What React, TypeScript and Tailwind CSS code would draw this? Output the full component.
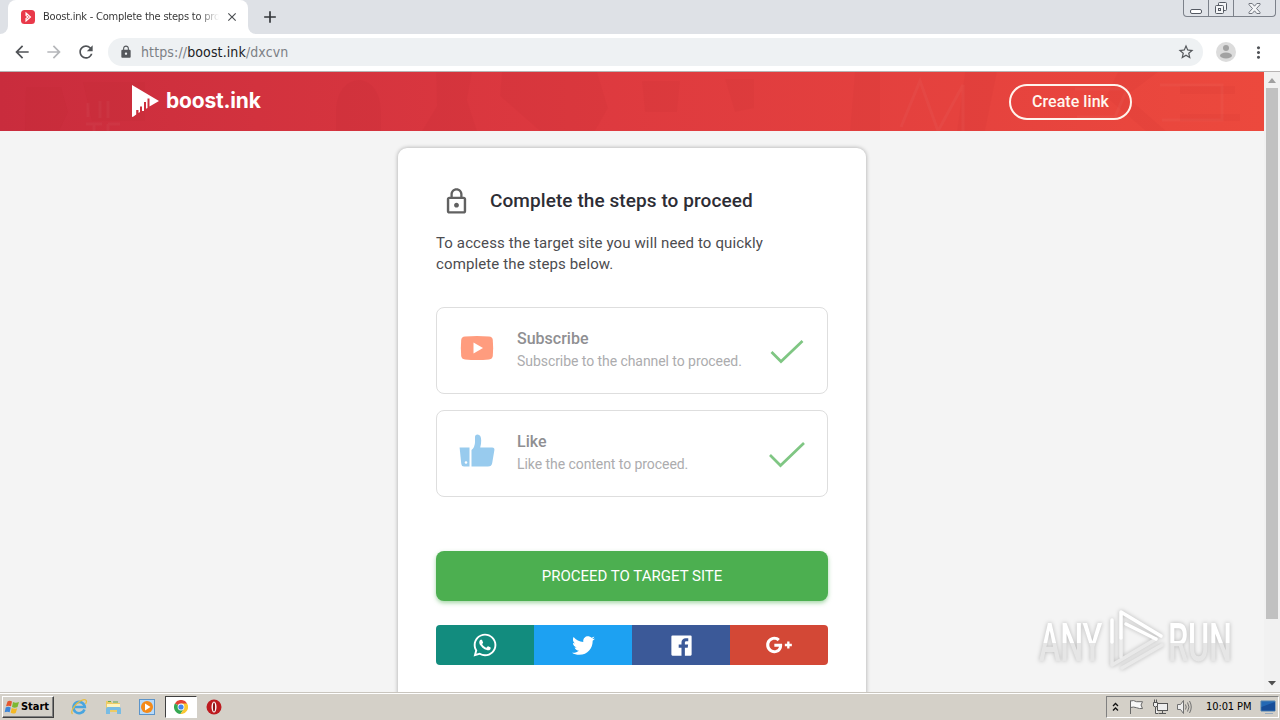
import type { ReactNode } from 'react';
import {
  MdAdd,
  MdArrowBack,
  MdArrowForward,
  MdClose,
  MdLock,
  MdLockOutline,
  MdMoreVert,
  MdRefresh,
  MdStarBorder,
} from 'react-icons/md';
import { FaTwitter, FaWhatsapp } from 'react-icons/fa';

export default function App() {
  return (
    <div className="relative flex h-[720px] w-[1280px] flex-col overflow-hidden bg-[#f4f4f4] font-['Roboto',sans-serif]">
      <TabStrip />
      <Toolbar />
      <div className="flex h-[620px] shrink-0">
        <main className="flex min-w-0 flex-1 flex-col overflow-hidden">
          <SiteHeader />
          <StepsCard />
        </main>
        <Scrollbar />
      </div>
      <Taskbar />
      <Watermark />
    </div>
  );
}

function TabStrip() {
  return (
    <div className="flex h-[34px] shrink-0 items-start justify-between bg-[#dee1e6]">
      <div className="flex h-full items-center">
        <div className="h-full w-2 bg-white">
          <div className="h-full rounded-br-lg bg-[#dee1e6]" />
        </div>
        <div className="flex h-full w-[240px] items-center rounded-t-lg bg-white pl-[13px]">
          <svg className="h-[14px] w-[14px] shrink-0" viewBox="0 0 14 14">
            <rect width="14" height="14" rx="3.5" fill="#e9394a" />
            <path d="M5 3l4.500 4L5 11V8.500L7 7 5 5.500z" fill="none" stroke="#fff" strokeWidth="1.1" />
          </svg>
          <span className="ml-2 mt-px w-[176px] overflow-hidden whitespace-nowrap bg-linear-to-r from-[#333] from-88% to-transparent bg-clip-text font-['DejaVu_Sans_Condensed','DejaVu_Sans',sans-serif] text-[11px] tracking-[-0.22px] text-transparent">
            Boost.ink - Complete the steps to proceed
          </span>
          <MdClose className="ml-1.5 shrink-0 text-[#4c4f53]" size={14} />
        </div>
        <div className="h-full w-2 bg-white">
          <div className="h-full rounded-bl-lg bg-[#dee1e6]" />
        </div>
        <MdAdd className="ml-1 text-[#33363a]" size={20} />
      </div>
      <div className="mr-1 flex h-[17px] w-[93px] rounded-b-[4px] border border-t-0 border-[#7c818a] bg-[#e0e3e8]">
        <div className="flex w-[25px] items-end justify-center border-r border-[#7c818a] pb-[2px]">
          <div className="h-[5px] w-[12px] rounded-xs border border-[#555a63] bg-white" />
        </div>
        <div className="flex w-[25px] items-center justify-center border-r border-[#7c818a]">
          <svg className="h-[14px] w-[14px]" viewBox="0 0 14 14" fill="#f4f5f7" stroke="#555a63">
            <rect x="4.500" y="1.500" width="8" height="8" rx="1" />
            <rect x="1.500" y="4.500" width="8" height="8" rx="1" />
            <rect x="4.500" y="7.500" width="2" height="2" />
          </svg>
        </div>
        <div className="flex flex-1 items-center justify-center">
          <svg className="h-[11px] w-[13px]" viewBox="0 0 13 11">
            <path
              d="M1 .5h3.200l2.300 2.700L8.800.5H12v1.200L8.500 5.500 12 9.300v1.200H8.800L6.500 7.800 4.200 10.500H1V9.300l3.500-3.800L1 1.700z"
              fill="#f4f5f7"
              stroke="#666b74"
              strokeWidth=".9"
            />
          </svg>
        </div>
      </div>
    </div>
  );
}

function Toolbar() {
  return (
    <div className="flex h-[38px] shrink-0 items-center border-b border-[#b7b4b4] bg-white pb-px pl-3">
      <MdArrowBack className="text-[#505357]" size={20} />
      <MdArrowForward className="ml-3 text-[#b5b7ba]" size={20} />
      <MdRefresh className="ml-3 text-[#505357]" size={20} />
      <div className="ml-3 flex h-7 w-[1095px] items-center rounded-full bg-[#eef1f3] pl-[11px] pr-[8px]">
        <MdLock className="text-[#55585c]" size={14} />
        <span className="ml-[8px] flex-1 whitespace-nowrap font-['DejaVu_Sans_Condensed','DejaVu_Sans',sans-serif] text-[14px] tracking-[0.12px] text-[#7c8085]">
          https://<span className="text-[#202124]">boost.ink</span>/dxcvn
        </span>
        <MdStarBorder className="text-[#55585c]" size={18} />
      </div>
      <svg className="ml-[13px] h-5 w-5" viewBox="0 0 20 20">
        <circle cx="10" cy="10" r="10" fill="#dcdcdc" />
        <circle cx="10" cy="6" r="3" fill="#a2a2a2" />
        <ellipse cx="10" cy="13.500" rx="6" ry="3" fill="#a2a2a2" />
      </svg>
      <MdMoreVert className="ml-[13px] text-[#505357]" size={19} />
    </div>
  );
}

function SiteHeader() {
  return (
    <header className="relative h-[59px] shrink-0 bg-linear-to-r from-[#c92c3d] via-[#dd393f] via-45% to-[#ec493d]">
      <HeaderArt />
      <div className="relative flex h-full items-center justify-between pl-[132px] pr-[132px]">
        <div className="flex items-center pb-px">
          <svg className="h-8 w-[27px]" viewBox="0 0 27 32">
            <path
              d="M0 0l27 16-9.500 5.500V13.500h-2V23l-1.500.8V17h-2v9h-2v-4.500H8V27l-1.500 1V25H4.200v4.500L1.500 31.500 0 32z"
              fill="#fff"
            />
          </svg>
          <span className="ml-[7px] font-['Inter',sans-serif] text-[21px] font-bold leading-8 tracking-[-0.2px] text-white">
            boost.ink
          </span>
        </div>
        <button className="mt-px h-9 w-[123px] rounded-full border-2 border-[#fff3ec] text-[16px] font-medium tracking-[0.05px] text-[#fff7ef]">
          Create link
        </button>
      </div>
    </header>
  );
}

// faint poster shapes behind the site header
function HeaderArt() {
  return (
    <svg className="absolute inset-0 h-full w-full" viewBox="0 0 1264 59" fill="none">
      <g fill="#8f1220" opacity=".04">
        <path d="M26 15h35l7 25-9 19H25zM83 10h62v39H92zM436 0h36l-5 28 10 31h-55l15-25z" />
        <path d="M502 0h95l11 36-13 23h-55l-40-35zM642 9h38l-3 31h-32zM725 7h29v29l-19 4z" />
        <path d="M855 0h25v59h-30zM965 0h32l-12 59h-28zM1118 0h40l-32 24 40 35h-20l-40-34z" />
        <path d="M336 40c0-42 45-43 45 0v19h-45zM1180 14h55v8h-55zM1180 42h60v7h-60z" />
      </g>
      <g stroke="#fff" opacity=".035" strokeWidth="3">
        <path d="M88 31v14m12-16v17m8-17v17M86 52h16m-8 0v7m14-7v7m0-7h12" />
        <path d="M901 55l19-46 18 50 25-46v46M1075 17h52l-12 28h-38M1160 13h62v35h-60" />
      </g>
    </svg>
  );
}

function StepsCard() {
  return (
    <section className="mx-auto mt-[17px] h-[580px] w-[468px] shrink-0 rounded-[9px] bg-white px-[38px] pt-[38px] shadow-[0_0_4px_rgba(0,0,0,0.32)]">
      <div className="flex h-[30px] items-center">
        <MdLockOutline className="ml-1.5 text-[#616161]" size={29} />
        <h1 className="ml-[19px] mt-px text-[19px] font-medium tracking-[0.08px] text-[#2d2d35]">
          Complete the steps to proceed
        </h1>
      </div>
      <p className="mt-[17px] whitespace-nowrap text-[15px] leading-[21px] tracking-[0.12px] text-[#4c4c50]">
        To access the target site you will need to quickly
        <br />
        complete the steps below.
      </p>
      <div className="mt-[32px] flex flex-col gap-4">
        <Step
          title="Subscribe"
          text="Subscribe to the channel to proceed."
          icon={
            <svg className="h-9 w-9" viewBox="0 0 36 36">
              <path
                d="M6 6.500q12-1.200 24 0 3.500.4 3.800 3.500.7 7.500 0 16-.3 3-3.800 3.400-12 1.200-24 0-3.500-.4-3.800-3.400-.7-8.500 0-16Q2.500 6.900 6 6.500z"
                fill="#ff9c7e"
              />
              <path d="M14.500 12.500v11l9.500-5.500z" fill="#fff" />
            </svg>
          }
          check="M2.500 18l9.500 9.500L33.500 7"
        />
        <Step
          title="Like"
          text="Like the content to proceed."
          icon={
            <svg className="h-9 w-9" viewBox="0 0 36 36" fill="#98cbee">
              <path d="M.6 14.500H10.500v19H5Q2.600 33.500 2.300 31z" />
              <path d="M12.500 17q3.500-3 3.500-8V4q0-2.500 2.500-2.500 3.700.2 3.700 6 0 3.500-1 7h12q2.500.3 2.200 2.500l-2.200 13q-.5 3.500-4.300 3.500H12.500z" />
              <circle cx="7" cy="29.500" r="1.300" fill="#fff" />
            </svg>
          }
          check="M1 18l10.500 10.500L35 6"
        />
      </div>
      <button className="mt-[54px] h-[50px] w-full rounded-lg bg-[#4caf50] text-[15px] text-white shadow-[0_2px_4px_rgba(76,175,80,0.5)]">
        PROCEED TO TARGET SITE
      </button>
      <ShareBar />
    </section>
  );
}

function Step({
  title,
  text,
  icon,
  check,
}: {
  title: string;
  text: string;
  icon: ReactNode;
  check: string;
}) {
  return (
    <div className="flex h-[87px] items-start rounded-lg border border-[#dedede] px-[22px]">
      <div className="mt-[22px]">{icon}</div>
      <div className="ml-[22px] mt-[20px] flex-1 whitespace-nowrap">
        <h2 className="text-[16px] font-medium leading-[22px] text-[#8f8f92]">{title}</h2>
        <p className="text-[14px] leading-[22px] tracking-[-0.06px] text-[#acacae]">{text}</p>
      </div>
      <svg className="mt-[26px] h-9 w-9 shrink-0" viewBox="0 0 36 36">
        <path d={check} fill="none" stroke="#7fc683" strokeWidth="2.700" />
      </svg>
    </div>
  );
}

function ShareBar() {
  return (
    <div className="mt-6 grid h-10 grid-cols-4 overflow-hidden rounded text-white">
      <div className="flex items-center justify-center bg-[#128c7e]">
        <FaWhatsapp size={26} />
      </div>
      <div className="flex items-center justify-center bg-[#1da1f2]">
        <FaTwitter size={23} />
      </div>
      <div className="flex items-center justify-center bg-[#3b5998]">
        <svg className="h-[27px] w-[27px]" viewBox="0 0 24 24" fill="currentColor" fillRule="evenodd">
          <path d="M4 3h16a1 1 0 0 1 1 1v16a1 1 0 0 1-1 1H4a1 1 0 0 1-1-1V4a1 1 0 0 1 1-1zM18 5.500h-2.200C13.500 5.500 12 7 12 9.200v2H9.500V14H12v7h3v-7h2.500l.4-2.800H15V9.500c0-.8.4-1.300 1.300-1.300H18z" />
        </svg>
      </div>
      <div className="flex items-center justify-center bg-[#d34836]">
        <svg className="h-7 w-7" viewBox="0 0 24 24" fill="currentColor">
          <path d="M23 11h-2V9h-2v2h-2v2h2v2h2v-2h2M8 11v2.400h4c-.2 1-1.200 3-4 3-2.400 0-4.300-2-4.300-4.400S5.600 7.600 8 7.600c1.400 0 2.300.6 2.800 1.100l1.900-1.800C11.500 5.700 9.900 5 8 5c-3.900 0-7 3.100-7 7s3.100 7 7 7c4 0 6.700-2.800 6.700-6.800 0-.5 0-.8-.1-1.200z" />
        </svg>
      </div>
    </div>
  );
}

function Scrollbar() {
  return (
    <div className="flex w-4 shrink-0 flex-col items-center bg-[#f1f1f1]">
      <svg className="h-4 w-4" viewBox="0 0 16 16">
        <path d="M4 11l4-5 4 5z" fill="#a0a0a0" />
      </svg>
      <div className="h-[531px] w-3 bg-[#c1c1c1]" />
      <svg className="mt-auto h-[17px] w-4" viewBox="0 0 16 17">
        <path d="M4 6l4 4.500L12 6z" fill="#505050" />
      </svg>
    </div>
  );
}

function Watermark() {
  return (
    <div className="absolute left-[1039px] top-[608px] flex h-[66px] w-[194px] items-center drop-shadow-[0_0_2px_rgba(0,0,0,0.25)]">
      <WatermarkWord text="ANY" />
      <svg
        className="h-[66px] w-16 shrink-0"
        viewBox="0 0 64 66"
        fill="none"
        strokeWidth="3.500"
        strokeLinejoin="round"
        strokeLinecap="round"
      >
        <path d="M8 34V57L52 31M18 60l40-23" stroke="#e9e9e9" />
        <path d="M17 49V30" stroke="#eee" />
        <path d="M8 34V12M17 30V4L57 28M22 16l30 15" stroke="#fff" />
      </svg>
      <WatermarkWord text="RUN" />
    </div>
  );
}

function WatermarkWord({ text }: { text: string }) {
  return (
    <div className="w-[65px] shrink-0">
      <span className="mt-[3px] block w-max origin-left scale-x-[0.6] bg-linear-to-b from-white from-50% to-[#e6e6e6] to-50% bg-clip-text text-[54px] font-medium leading-[66px] tracking-[-0.5px] text-transparent">
        {text}
      </span>
    </div>
  );
}

function Taskbar() {
  return (
    <footer className="flex h-[28px] shrink-0 items-center border-t border-[#c9c5be] bg-[#d4d0c8] font-['DejaVu_Sans_Condensed','DejaVu_Sans',sans-serif] shadow-[inset_0_1px_0_#fff]">
      <div className="ml-[2px] flex h-[22px] w-[52px] items-center border border-t-white border-l-white border-r-[#404040] border-b-[#404040] shadow-[inset_-1px_-1px_0_#808080]">
        <svg className="ml-px h-4 w-4 shrink-0" viewBox="0 0 16 16">
          <path d="M3.500 2.500q2-1.300 4.500 0L7 7.300Q4.500 6 2 7.300z" fill="#e4572e" />
          <path d="M9 3q2.500 1.500 6 0l-1.500 5Q10.500 9.500 8 8z" fill="#7db831" />
          <path d="M1.700 8.500q2.500-1.300 5 0l-1 4.800q-2.500-1.300-5 0z" fill="#3d86d8" />
          <path d="M7.700 9q2.500 1.500 5.500.2l-1.500 4.800q-2.700 1.200-5-.2z" fill="#f4b824" />
        </svg>
        <span className="ml-px mt-0.5 text-[11px] font-bold tracking-[-0.05px] text-black">Start</span>
      </div>
      <svg className="ml-4 h-[18px] w-[18px]" viewBox="0 0 18 18" fill="none">
        <path d="M14.500 11.500A5.700 5.700 0 1 1 14.800 9H5" stroke="#49a5df" strokeWidth="2.600" />
        <path d="M2.500 16C-.5 13 7 3.500 13 1.800c4-1 4 2 2.500 4" stroke="#e7bd42" strokeWidth="1.300" />
      </svg>
      <svg className="ml-4 h-[18px] w-[18px]" viewBox="0 0 18 18">
        <path d="M2 3h5l1 2h8v9H2z" fill="#edcb65" />
        <path d="M3 6h13v3H3z" fill="#fff3bd" />
        <path d="M4 9h11q2 0 2 2v5h-4v-4H6v4H2v-5q0-2 2-2z" fill="#78bce4" />
        <path d="M4 3.500h3M9 4h5" stroke="#65a94b" />
      </svg>
      <svg className="ml-4 h-[18px] w-[18px]" viewBox="0 0 18 18">
        <rect x="1.500" y="1.500" width="15" height="15" fill="#b7dafa" stroke="#5c94c9" />
        <circle cx="9" cy="9" r="6" fill="#f48a19" />
        <path d="M7 5.500v7l5.500-3.500z" fill="#fff" />
      </svg>
      <div className="ml-[9px] flex h-[22px] w-8 items-center justify-center border border-t-[#404040] border-l-[#404040] border-r-white border-b-white bg-white">
        <svg className="h-[14px] w-[14px]" viewBox="0 0 14 14">
          <path d="M7 7L.9 3.500a7 7 0 0 1 12.200 0z" fill="#e34234" />
          <path d="M7 7L.9 3.500A7 7 0 0 0 6.500 14L10 8.700z" fill="#36a852" />
          <path d="M7 3.500h6.100A7 7 0 0 1 6.500 14L10 8.700z" fill="#fac731" />
          <circle cx="7" cy="7" r="3.400" fill="#fff" />
          <circle cx="7" cy="7" r="2.600" fill="#4385ee" />
        </svg>
      </div>
      <svg className="ml-[9px] h-4 w-4" viewBox="0 0 16 16">
        <circle cx="8" cy="8" r="7.500" fill="#bd1b20" />
        <ellipse cx="8" cy="8" rx="2.500" ry="5.500" fill="#fff" />
        <ellipse cx="8" cy="8" rx="1.100" ry="4.500" fill="#8c1519" />
      </svg>
      <div className="ml-auto mr-px flex h-[22px] w-[173px] items-center border border-t-[#808080] border-l-[#808080] border-r-white border-b-white pl-[5px]">
        <svg className="h-2.5 w-[7px]" viewBox="0 0 7 10" fill="none" stroke="#111" strokeWidth="1.300">
          <path d="M1 4l2.500-2.500L6 4M1 8.500L3.500 6 6 8.500" />
        </svg>
        <svg className="ml-[9px] h-4 w-4" viewBox="0 0 16 16" fill="#f8f8f8" stroke="#696969">
          <path d="M2.500 15V1.500M2.500 2q3-1.200 6 .7H14.500l-1.500 3.300 1.500 3.500q-3 .5-6-.8-3-1.200-6-.2" />
        </svg>
        <svg className="ml-2 h-4 w-4" viewBox="0 0 16 16" fill="#eee" stroke="#555">
          <rect x="5.500" y="4.500" width="10" height="7" />
          <path d="M7 14.500h7M10.500 12v2M3.500 8v6.500h3M1.500 3.500h4V7q-2 2-4 0zM2.500 3V.5M4.500 3V.5" />
        </svg>
        <svg className="ml-2 h-4 w-4" viewBox="0 0 16 16" fill="#eee" stroke="#707070">
          <path d="M1.500 5.500h3l3-4v13l-3-4h-3z" />
          <path d="M9.500 5.500q1.500 2.500 0 5M11.500 3.500q3 4.500 0 9M13.500 2q3.500 6 0 12" fill="none" />
        </svg>
        <span className="ml-[14px] mt-0.5 w-[48px] whitespace-nowrap text-[11px] tracking-[-0.1px] text-black">
          10:01 PM
        </span>
        <svg className="ml-[6px] h-4 w-4 shrink-0" viewBox="0 0 16 16">
          <path d="M1 2h14v10H1z" fill="#2368b4" stroke="#5382ad" />
          <path d="M1.500 8L15 3v8.500H1.500z" fill="#174d98" />
          <path d="M5 14.500h8" stroke="#97abc0" />
        </svg>
      </div>
    </footer>
  );
}
